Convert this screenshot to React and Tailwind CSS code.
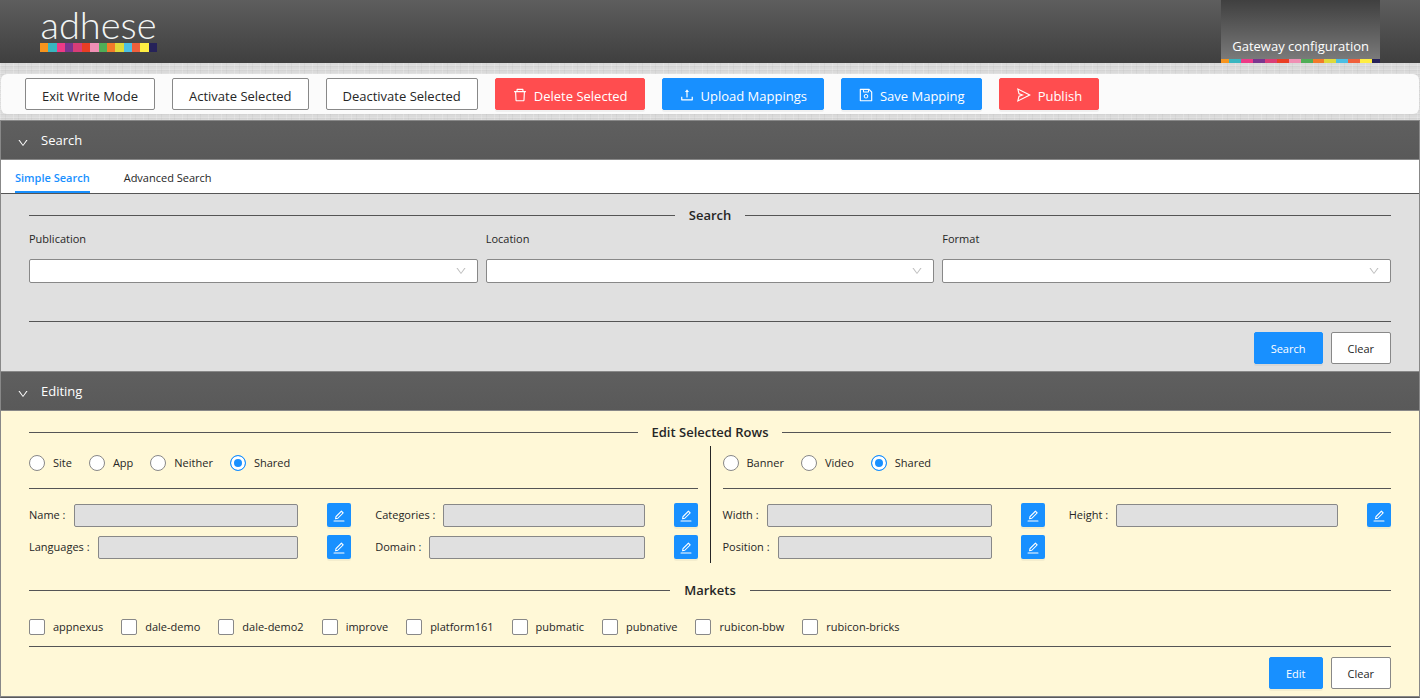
import React, { useState } from 'react';
import {
    AiOutlineDelete,
    AiOutlineDown,
    AiOutlineEdit,
    AiOutlineSave,
    AiOutlineSend,
    AiOutlineUpload,
} from 'react-icons/ai';

const STRIPE = [
    'bg-[#f7941d]', 'bg-[#38b6c0]', 'bg-[#ee3a86]', 'bg-[#7a368f]', 'bg-[#d93d77]',
    'bg-[#ea3e24]', 'bg-[#f08fb4]', 'bg-[#4fae57]', 'bg-[#f37a2a]', 'bg-[#dfd93a]',
    'bg-[#4bbfe4]', 'bg-[#f0603c]', 'bg-[#ffee42]', 'bg-[#262259]',
];

const MARKETS = [
    'appnexus', 'dale-demo', 'dale-demo2', 'improve', 'platform161',
    'pubmatic', 'pubnative', 'rubicon-bbw', 'rubicon-bricks',
];

const BUTTON_KINDS = {
    default: 'border-[#888] bg-white text-[#262626]',
    primary: 'border-[#1890ff] bg-[#1890ff] text-white shadow-[0_2px_0_rgba(0,0,0,0.045)]',
    danger: 'border-[#ff4d4f] bg-[#ff4d4f] text-white shadow-[0_2px_0_rgba(0,0,0,0.045)]',
};

const BUTTON_SIZES = {
    small: 'px-4 pt-0.5 text-[11px]',
    large: 'px-4 pt-1 text-[13px]',
};

function Button({ kind = 'default', size = 'small', icon: Icon, children }) {
    return (
        <button type="button" className={`flex h-8 items-center gap-1.5 rounded-xs border ${BUTTON_SIZES[size]} ${BUTTON_KINDS[kind]}`}>
            {Icon && <Icon className="mb-0.5 size-4" />}
            {children}
        </button>
    );
}

function Section({ title, children }) {
    const [open, setOpen] = useState(true);
    return (
        <section>
            <button
                type="button"
                aria-expanded={open}
                onClick={() => setOpen(!open)}
                className="flex h-10 w-full items-center gap-3 border-y border-[#888] bg-linear-to-b from-[#5f5f5f] to-[#595959] px-4 text-[13px] text-white"
            >
                <AiOutlineDown className={open ? 'mt-1.5 size-3' : 'mt-1.5 size-3 -rotate-90'} />
                {title}
            </button>
            {open && children}
        </section>
    );
}

// Title with a rule on each side
function Divider({ children }) {
    return (
        <div className="flex h-6 items-center gap-3.5 text-[13px] font-semibold text-[#262626]">
            <span className="h-px flex-1 bg-[#555]" />
            <h2>{children}</h2>
            <span className="h-px flex-1 bg-[#555]" />
        </div>
    );
}

function SelectField({ id, label }) {
    return (
        <div>
            <label htmlFor={id} className="block h-7">{label}</label>
            <div className="relative">
                <select id={id} className="block h-6 w-full appearance-none rounded-xs border border-[#888] bg-white px-2">
                    <option value=""></option>
                </select>
                <AiOutlineDown className="pointer-events-none absolute top-1.5 right-[11px] size-3 text-[#bfbfbf]" />
            </div>
        </div>
    );
}

function RadioRow({ name, options }) {
    const [value, setValue] = useState('Shared');
    return (
        <div className="flex h-[34px] items-center gap-[17px]">
            {options.map(option => (
                <label key={option} className="flex items-center gap-2">
                    <input
                        type="radio"
                        name={name}
                        checked={value === option}
                        onChange={() => setValue(option)}
                        className="size-4 appearance-none rounded-full border border-[#888] bg-white checked:border-[#1890ff] checked:bg-[#1890ff] checked:shadow-[inset_0_0_0_3px_#fff]"
                    />
                    {option}
                </label>
            ))}
        </div>
    );
}

function EditField({ label }) {
    const id = `field-${label.toLowerCase()}`;
    return (
        <div className="flex h-6 items-center">
            <label htmlFor={id} className="mr-2">{label} :</label>
            <input id={id} disabled className="h-[23px] min-w-0 flex-1 rounded-xs border border-[#888] bg-[#e0e0e0] px-2" />
            <button
                type="button"
                aria-label={`Edit ${label}`}
                className="ml-[29px] flex size-6 items-center justify-center rounded-xs bg-[#1890ff] pt-0.5 text-white shadow-[0_2px_0_rgba(0,0,0,0.045)]"
            >
                <AiOutlineEdit className="size-3.5" />
            </button>
        </div>
    );
}

function EditGroup({ name, options, fields }) {
    return (
        <div className="flex-1">
            <RadioRow name={name} options={options} />
            <hr className="mt-2 border-[#555]" />
            <div className="mt-3.5 grid grid-cols-2 gap-x-6 gap-y-2">
                {fields.map(field => <EditField key={field} label={field} />)}
            </div>
        </div>
    );
}

export default function App() {
    const [tab, setTab] = useState('Simple Search');

    return (
        <div className="bg-[#dadada] bg-[repeating-linear-gradient(90deg,rgba(255,255,255,0.18)_0_1px,transparent_1px_5px,rgba(0,0,0,0.03)_5px_6px,transparent_6px_13px),repeating-linear-gradient(0deg,rgba(255,255,255,0.15)_0_1px,transparent_1px_3px,rgba(0,0,0,0.03)_3px_4px)] font-['Open_Sans','Noto_Sans',sans-serif] text-[11px] leading-4 text-[#262626]">
            <header className="flex h-[63px] justify-between bg-linear-to-b from-[#5e5e5e] to-[#3f3f3f] px-10">
                <div className="w-[117px]">
                    <div className="flex h-[43px] items-start justify-center font-['Lato'] text-[38px] leading-[48px] font-light text-[#f2f5f5]">adhese</div>
                    <div className="flex h-[9px]">
                        {STRIPE.map(color => <span key={color} className={`flex-1 ${color}`} />)}
                    </div>
                </div>
                <nav className="flex flex-col justify-end bg-linear-to-b from-[#404040] to-[#7e7e7e]">
                    <a href="#gateway" className="px-[11px] pb-0.5 text-[13px] leading-[22px] text-white">Gateway configuration</a>
                    <div className="flex h-1">
                        {STRIPE.map(color => <span key={color} className={`flex-3 first:flex-2 last:flex-2 ${color}`} />)}
                    </div>
                </nav>
            </header>

            <div className="mx-px mt-[11px] mb-1.5 flex gap-[17px] rounded-md bg-[#fbfbfb] px-6 py-1">
                <Button size="large">Exit Write Mode</Button>
                <Button size="large">Activate Selected</Button>
                <Button size="large">Deactivate Selected</Button>
                <Button size="large" kind="danger" icon={AiOutlineDelete}>Delete Selected</Button>
                <Button size="large" kind="primary" icon={AiOutlineUpload}>Upload Mappings</Button>
                <Button size="large" kind="primary" icon={AiOutlineSave}>Save Mapping</Button>
                <Button size="large" kind="danger" icon={AiOutlineSend}>Publish</Button>
            </div>

            <main className="border-x border-b border-x-[#888] border-b-[#5a5a5a]">
                <Section title="Search">
                    <div role="tablist" className="flex h-[34px] gap-[34px] border-b border-[#555] bg-white px-3.5">
                        {['Simple Search', 'Advanced Search'].map(name => (
                            <button
                                key={name}
                                type="button"
                                role="tab"
                                aria-selected={tab === name}
                                onClick={() => setTab(name)}
                                className={tab === name
                                    ? 'border-b-2 border-[#1890ff] pt-1 font-semibold text-[#1890ff]'
                                    : 'border-b-2 border-transparent pt-1'}
                            >
                                {name}
                            </button>
                        ))}
                    </div>
                    <div className="bg-[#e0e0e0] px-7 pt-[9px] pb-[7px]">
                        <Divider>Search</Divider>
                        <div className="mt-1 grid grid-cols-3 gap-2 pb-[38px]">
                            <SelectField id="publication" label="Publication" />
                            <SelectField id="location" label="Location" />
                            <SelectField id="format" label="Format" />
                        </div>
                        <div className="flex justify-end gap-2 border-t border-[#555] pt-2.5">
                            <Button kind="primary">Search</Button>
                            <Button>Clear</Button>
                        </div>
                    </div>
                </Section>

                <Section title="Editing">
                    <div className="border-b border-[#888] bg-[#fff8d7] px-7 pt-[9px] pb-[7px]">
                        <Divider>Edit Selected Rows</Divider>
                        <div className="mt-0.5 flex gap-3 pb-[15px]">
                            <EditGroup
                                name="channel"
                                options={['Site', 'App', 'Neither', 'Shared']}
                                fields={['Name', 'Categories', 'Languages', 'Domain']}
                            />
                            <div className="-mb-1 w-px bg-[#262626]" />
                            <EditGroup
                                name="media"
                                options={['Banner', 'Video', 'Shared']}
                                fields={['Width', 'Height', 'Position']}
                            />
                        </div>
                        <div className="mt-1">
                            <Divider>Markets</Divider>
                        </div>
                        <div className="mt-4 flex flex-wrap gap-x-[18px] gap-y-2 pb-2.5">
                            {MARKETS.map(market => (
                                <label key={market} className="flex h-[18px] items-center gap-2">
                                    <input type="checkbox" className="size-4 appearance-none rounded-xs border border-[#888] bg-white checked:bg-[#1890ff]" />
                                    {market}
                                </label>
                            ))}
                        </div>
                        <div className="flex justify-end gap-2 border-t border-[#555] pt-2.5">
                            <Button kind="primary">Edit</Button>
                            <Button>Clear</Button>
                        </div>
                    </div>
                </Section>
            </main>
        </div>
    );
}
